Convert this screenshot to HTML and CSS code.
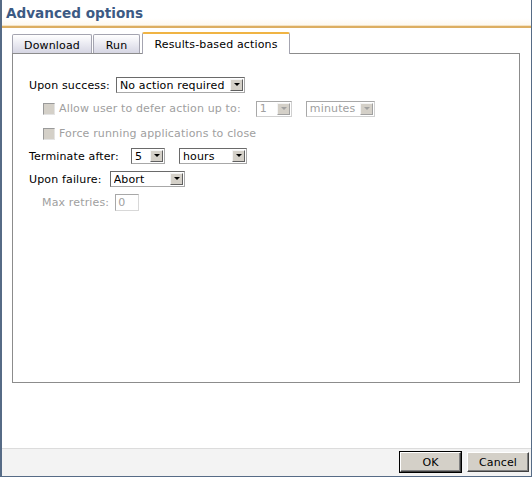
FILE: index.html
```html
<!DOCTYPE html>
<html>
<head>
<meta charset="utf-8">
<link rel="stylesheet" href="styles.css">
</head>
<body>
<div class="window">
  <div class="titlebar"><span class="title">Advanced options</span></div>
  <div class="tabs">
    <div class="tab tab-download">Download</div>
    <div class="tab tab-run">Run</div>
    <div class="tab tab-active">Results-based actions</div>
  </div>
  <div class="panel">
    <div class="row row-success">
      <span class="label">Upon success:</span>
      <span class="select w-success"><span class="val">No action required</span><span class="arrow"></span></span>
    </div>
    <div class="row row-indent row-defer disabled">
      <span class="check"></span>
      <span class="label">Allow user to defer action up to:</span>
      <span class="select dis w-num"><span class="val">1</span><span class="arrow"></span></span>
      <span class="select dis w-min gap-min"><span class="val">minutes</span><span class="arrow"></span></span>
    </div>
    <div class="row row-indent row-force disabled">
      <span class="check"></span>
      <span class="label">Force running applications to close</span>
    </div>
    <div class="row row-term">
      <span class="label">Terminate after:</span>
      <span class="select w-five"><span class="val">5</span><span class="arrow"></span></span>
      <span class="select w-hours gap-hours"><span class="val">hours</span><span class="arrow"></span></span>
    </div>
    <div class="row row-fail">
      <span class="label">Upon failure:</span>
      <span class="select w-abort"><span class="val">Abort</span><span class="arrow"></span></span>
    </div>
    <div class="row row-retry disabled">
      <span class="label">Max retries:</span>
      <span class="textbox">0</span>
    </div>
  </div>
  <div class="spacer"></div>
  <div class="footer">
    <button class="btn btn-ok">OK</button>
    <button class="btn btn-cancel">Cancel</button>
  </div>
</div>
</body>
</html>
```
FILE: styles.css
```css
html, body {
  margin: 0;
  padding: 0;
  background: #ffffff;
}
body {
  font-family: "DejaVu Sans", Verdana, sans-serif;
  font-size: 11px;
  letter-spacing: 0.15px;
  color: #000;
}
.window {
  width: 532px;
  height: 477px;
  box-sizing: border-box;
  border-left: 2px solid #566b86;
  border-right: 1px solid #566b86;
  border-bottom: 1px solid #566b86;
  display: flex;
  flex-direction: column;
  background: #fff;
}
.titlebar {
  height: 28px;
  box-sizing: border-box;
  padding: 5px 0 0 4px;
  border-bottom: 2px solid #dcae62;
  box-shadow: 0 -1px 0 #f5e3c3 inset;
  background: linear-gradient(#ffffff 0, #ffffff 70%, #fdf8ef 100%);
}
.title {
  font-weight: bold;
  font-size: 13.6px;
  letter-spacing: 0;
  color: #3c5a84;
}
.tabs {
  display: flex;
  align-items: flex-end;
  margin: 2px 0 0 10px;
  height: 23px;
  position: relative;
  z-index: 1;
}
.tab {
  height: 19px;
  box-sizing: border-box;
  border: 1px solid #a4a4b0;
  border-bottom: none;
  border-radius: 2px 2px 0 0;
  background: linear-gradient(#ffffff, #e6e6ef 60%, #d6d6e3);
  display: flex;
  align-items: center;
  justify-content: center;
  padding-top: 2px;
}
.tab-download { width: 80px; }
.tab-run { width: 47px; margin-left: 1px; }
.tab-active {
  width: 148px;
  margin-left: 2px;
  background: #fff;
  border-color: #a4a4b0;
  border-top: 2px solid #f0b444;
  margin-bottom: -1px;
  height: 22px;
  padding-top: 0;
}
.panel {
  margin: 0 11px 0 10px;
  height: 330px;
  box-sizing: border-box;
  border: 1px solid #8c8c8c;
  padding: 23px 0 0 16px;
  display: flex;
  flex-direction: column;
}
.row {
  display: flex;
  align-items: center;
  height: 16px;
  margin-bottom: 7px;
  white-space: nowrap;
}
.row-indent { padding-left: 14px; height: 17px; }
.row-defer { margin-bottom: 8px; }
.row-force { margin-bottom: 6px; }
.row-retry { padding-left: 13px; height: 17px; }
.disabled { color: #a0a0a0; }
.row-success .label { margin-right: 6px; }
.row-defer .label { margin-right: 15px; }
.row-term .label { margin-right: 12px; }
.row-fail .label { margin-right: 8px; }
.row-retry .label { margin-right: 6px; }
.check {
  width: 12px;
  height: 12px;
  box-sizing: border-box;
  border: 1px solid #9a9a9a;
  border-right-color: #e4e4e4;
  border-bottom-color: #e4e4e4;
  background: #d4d0c8;
  margin-right: 4px;
}
.select {
  display: inline-flex;
  align-items: center;
  height: 16px;
  box-sizing: border-box;
  border: 1px solid #6a6a6a;
  border-right-color: #a8a8a8;
  border-bottom-color: #a8a8a8;
  background: #fff;
  padding: 0 1px 0 3px;
  color: #000;
}
.select .val { flex: 1; overflow: hidden; }
.select .arrow {
  width: 13px;
  height: 12px;
  box-sizing: border-box;
  background: #d4d0c8;
  border: 1px solid;
  border-color: #f4f4f4 #606060 #606060 #f4f4f4;
  position: relative;
}
.select .arrow::after {
  content: "";
  position: absolute;
  left: 3px;
  top: 3px;
  border-left: 3px solid transparent;
  border-right: 3px solid transparent;
  border-top: 3px solid #000;
}
.select.dis { border-color: #a8a8a8 #d0d0d0 #d0d0d0 #a8a8a8; color: #a0a0a0; }
.select.dis .arrow { border-color: #f4f4f4 #a0a0a0 #a0a0a0 #f4f4f4; }
.select.dis .arrow::after { border-top-color: #a0a0a0; }
.w-success { width: 129px; }
.w-num { width: 36px; }
.w-min { width: 69px; }
.w-five { width: 34px; }
.w-hours { width: 68px; }
.w-abort { width: 75px; }
.gap-min { margin-left: 14px; }
.gap-hours { margin-left: 14px; }
.textbox {
  width: 24px;
  height: 17px;
  box-sizing: border-box;
  border: 1px solid #a8a8a8;
  border-right-color: #d8d8d8;
  border-bottom-color: #d8d8d8;
  padding-left: 2px;
  line-height: 15px;
  color: #a0a0a0;
}
.spacer { flex: 1; border-bottom: 1px solid #dcdcdc; }
.footer {
  height: 26px;
  background: #f3f3f3;
  display: flex;
  justify-content: flex-end;
  align-items: center;
  padding: 0 2px 1px 0;
  gap: 6px;
}
.btn {
  font-family: "DejaVu Sans", Verdana, sans-serif;
  font-size: 11px;
  letter-spacing: 0.15px;
  height: 20px;
  margin: 0;
  padding: 0;
  background: #d4d0c8;
  border: 1px solid;
  border-color: #ffffff #404040 #404040 #ffffff;
  box-shadow: inset -1px -1px 0 #808080;
  color: #000;
}
.btn-ok { width: 61px; outline: 1px solid #000; outline-offset: 0; }
.btn-cancel { width: 62px; }
```
